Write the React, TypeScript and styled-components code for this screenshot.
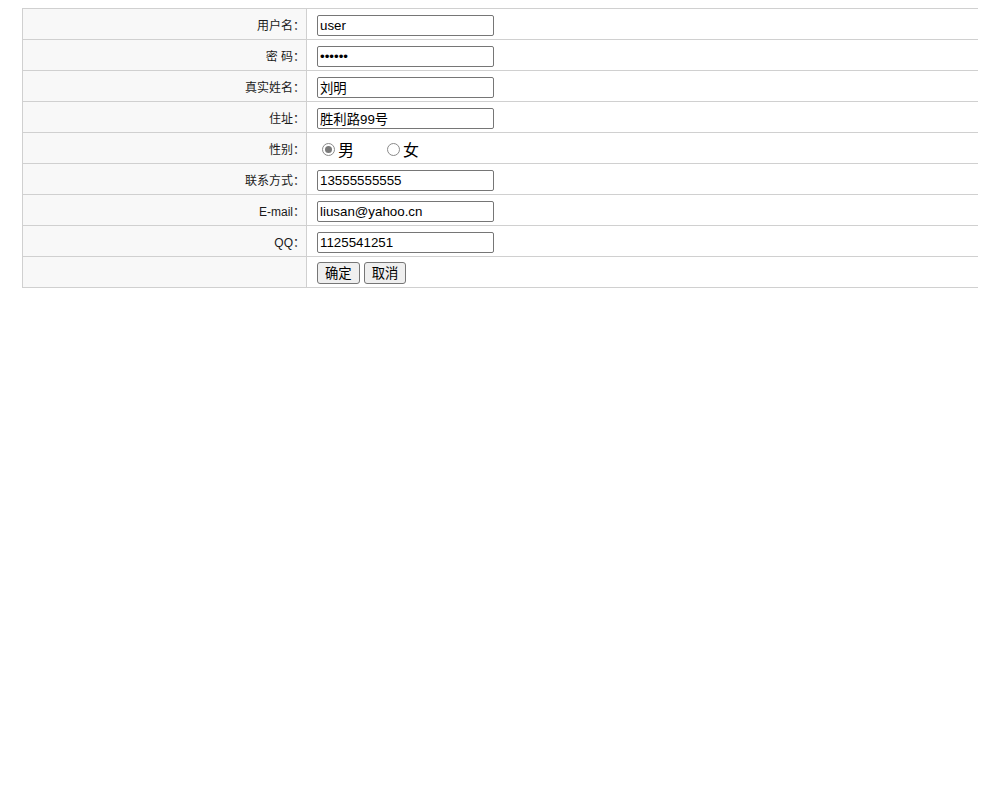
import React from "react";
import styled, { createGlobalStyle } from "styled-components";

const GlobalStyle = createGlobalStyle`
    html {
        overflow: hidden;
    }
    body {
        margin: 8px;
        background: #fff;
        font-family: "Liberation Sans", "Noto Sans CJK SC", sans-serif;
        color: #111;
    }
`

const FormTable = styled.form`
    display: grid;
    grid-template-columns: 284px 1fr;
    grid-auto-rows: 31px;
    margin: 0 -14px 0 14px;
    border-top: 1px solid #d0d0d0;
    border-left: 1px solid #d0d0d0;
`

const LabelCell = styled.div`
    display: flex;
    align-items: center;
    justify-content: flex-end;
    box-sizing: border-box;
    padding: 1px 1px 0 0;
    background-color: #f8f8f8;
    border-right: 1px solid #d0d0d0;
    border-bottom: 1px solid #d0d0d0;
    font-family: "Liberation Sans", "Noto Sans CJK SC", sans-serif;
    font-size: 12px;
    color: #1a1a1a;
    white-space: pre;
`

const ValueCell = styled.div<{top?: number}>`
    display: flex;
    align-items: flex-start;
    gap: 4px;
    box-sizing: border-box;
    padding: ${({top}) => top ?? 6}px 10px 0;
    border-bottom: 1px solid #d0d0d0;
    background-color: #fff;
`

const TextInput = styled.input`
    box-sizing: border-box;
    width: 177px;
    height: 21px;
    margin: 0;
    padding: 1px 2px;
    border: 1px solid #767676;
    border-radius: 2px;
    font-family: "Liberation Sans", "Noto Sans CJK SC", sans-serif;
    font-size: 13.33px;
    color: #000;
    background: #fff;
    outline: none;
`

const RadioLabel = styled.label<{gapAfter?: number}>`
    display: inline-flex;
    align-items: center;
    margin-right: ${({gapAfter}) => gapAfter ?? 0}px;
    font-family: "Noto Sans CJK SC", sans-serif;
    font-size: 16px;
    line-height: 17px;
    color: #000;
`

const Radio = styled.input`
    appearance: none;
    box-sizing: border-box;
    width: 13px;
    height: 13px;
    margin: 0 3px 0 5px;
    border: 1px solid #8a8a8a;
    border-radius: 50%;
    background: #fff;
    display: grid;
    place-content: center;

    &:checked::before {
        content: "";
        width: 7px;
        height: 7px;
        border-radius: 50%;
        background: #7a7a7a;
    }
`

const Button = styled.button`
    box-sizing: border-box;
    height: 22px;
    margin: 0;
    padding: 1px 7px;
    border: 1px solid #767676;
    border-radius: 3px;
    background-color: #efefef;
    font-family: "Noto Sans CJK SC", sans-serif;
    font-size: 13.33px;
    line-height: 18px;
    color: #000;
`

interface Field {
    label: string,
    type: string,
    value: string
}

const fields: Field[] = [
    { label: "用户名：", type: "text", value: "user" },
    { label: "密 码：", type: "password", value: "123456" },
    { label: "真实姓名：", type: "text", value: "刘明" },
    { label: "住址：", type: "text", value: "胜利路99号" },
]

const contacts: Field[] = [
    { label: "联系方式：", type: "text", value: "13555555555" },
    { label: "E-mail：", type: "text", value: "liusan@yahoo.cn" },
    { label: "QQ：", type: "text", value: "1125541251" },
]

const App: React.FC = () => {
    const renderField = (f: Field) => (
        <React.Fragment key={f.label}>
            <LabelCell>{f.label}</LabelCell>
            <ValueCell>
                <TextInput type={f.type} defaultValue={f.value} />
            </ValueCell>
        </React.Fragment>
    )

    return (
        <>
        <GlobalStyle />
        <FormTable onSubmit={(e) => e.preventDefault()}>
            {fields.map(renderField)}

            <LabelCell>性别：</LabelCell>
            <ValueCell top={8}>
                <RadioLabel gapAfter={24}>
                    <Radio type="radio" name="sex" defaultChecked />男
                </RadioLabel>
                <RadioLabel>
                    <Radio type="radio" name="sex" />女
                </RadioLabel>
            </ValueCell>

            {contacts.map(renderField)}

            <LabelCell />
            <ValueCell top={5}>
                <Button type="submit">确定</Button>
                <Button type="button">取消</Button>
            </ValueCell>
        </FormTable>
        </>
    )
}

export default App;
